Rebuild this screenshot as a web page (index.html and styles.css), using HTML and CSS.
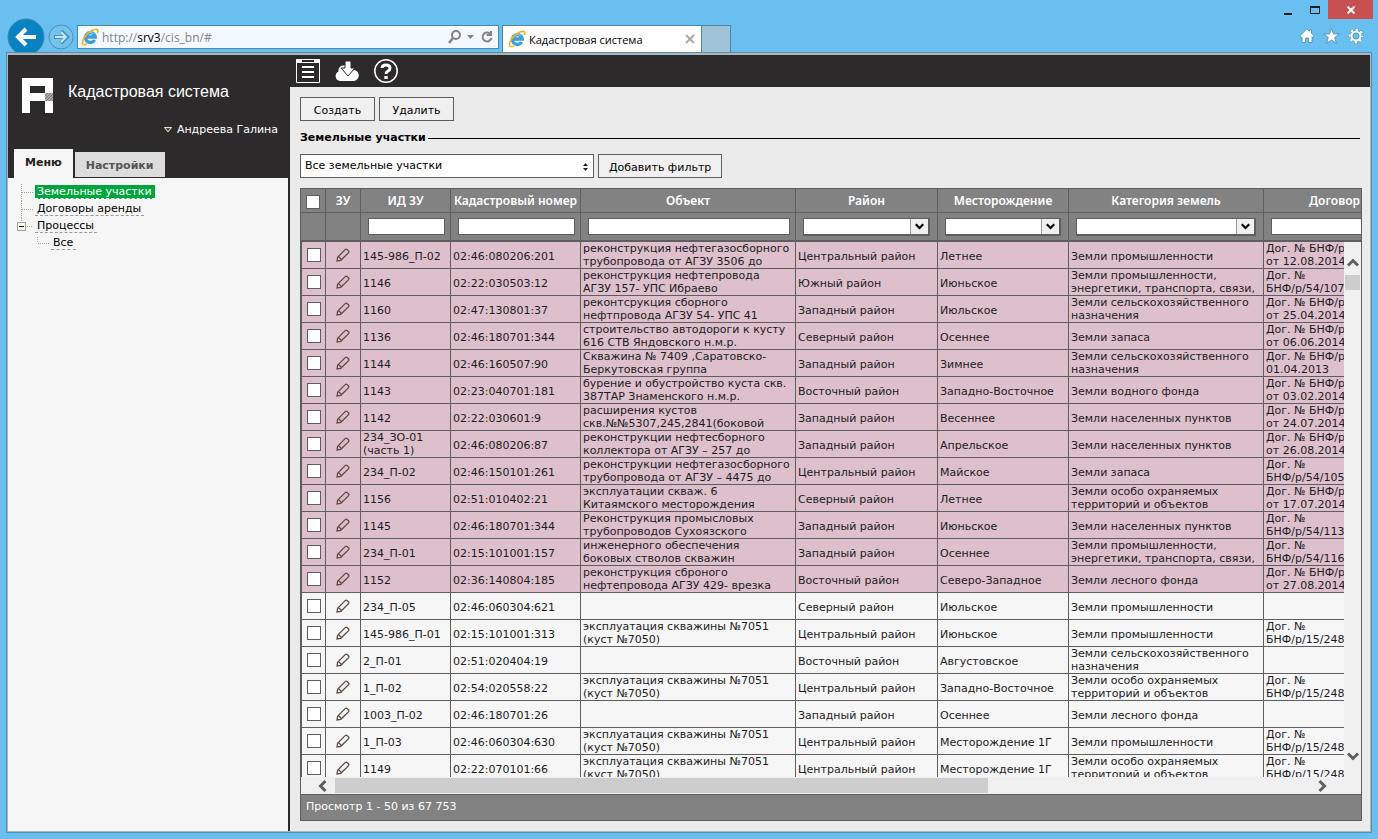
FILE: index.html
```html
<!DOCTYPE html>
<html lang="ru">
<head>
<meta charset="utf-8">
<title>Кадастровая система</title>
<link rel="stylesheet" href="styles.css">
</head>
<body>
<svg class="defs" aria-hidden="true">
  <symbol id="ie" viewBox="0 0 18 18">
    <path d="M13.600 12A4.900 4.900 0 1 1 14.200 9H5" fill="none" stroke="#3c9edb" stroke-width="3.400"/>
    <path d="M5.500 5.500Q9 3 12.500 5.500" fill="none" stroke="#9bd6f7" stroke-width="1"/>
    <path d="M2.400 16.600C.400 15.600 1.600 10.500 6 6.200C10.500 1.600 15.600 .200 16.600 2.200C17 3 16.700 4 16.300 5" fill="none" stroke="#f2b41c" stroke-width="1.700"/>
    <path d="M2.400 16.600C3.400 17 5 16.300 6 15.600" fill="none" stroke="#f2b41c" stroke-width="1.500"/>
  </symbol>
  <symbol id="pencil" viewBox="0 0 14 14">
    <path d="M1 13L1.600 9.200L9.400 1.400Q10.200 .800 11 1.400L12.600 3Q13.200 3.800 12.600 4.600L4.800 12.300ZM1.600 9.200Q2.500 8.600 3.200 9.200L4.800 10.800Q5.300 11.500 4.800 12.300" fill="none" stroke="#5d4c46" stroke-width="1.300"/>
  </symbol>
  <symbol id="chevron" viewBox="0 0 12 8">
    <path d="M1 1L6 6L11 1" fill="none" stroke="currentColor" stroke-width="3"/>
  </symbol>
</svg>

<div class="window">
  <header class="chrome">
    <div class="nav">
      <button class="back" aria-label="Назад"><svg width="38" height="38" viewBox="0 0 38 38"><circle cx="19" cy="19" r="18" fill="#0783c3" stroke="#3b86a8"/><path d="M29 19H12M19 11L11 19L19 27" fill="none" stroke="#fff" stroke-width="4"/></svg></button>
      <button class="forward" aria-label="Вперёд"><svg width="26" height="26" viewBox="0 0 26 26"><circle cx="13" cy="13" r="12" fill="#74c3ee" stroke="#4a91b5"/><path d="M6 13H18M13 7L19 13L13 19" fill="none" stroke="#4a91b5" stroke-width="4"/><path d="M7 13H18M13 8L18 13L13 18" fill="none" stroke="#c5e7f9" stroke-width="2"/></svg></button>
      <div class="address">
        <svg width="18" height="18"><use href="#ie"/></svg>
        <div class="url" role="textbox" aria-label="Адрес">http://<span class="host">srv3</span>/cis_bn/#</div>
        <svg width="46" height="16" viewBox="0 0 46 16"><circle cx="8" cy="6" r="4" fill="none" stroke="#7f8587" stroke-width="2"/><path d="M5 9L1 14" stroke="#7f8587" stroke-width="2.500"/><path d="M19 6H26L22.500 10Z" fill="#7f8587"/><path d="M42 4.500A4.500 4.500 0 1 0 43.500 9M43 2V6H38.500" fill="none" stroke="#7f8587" stroke-width="2"/></svg>
      </div>
      <div class="tab">
        <svg width="18" height="18"><use href="#ie"/></svg>
        <span class="tab-title">Кадастровая система</span>
        <button aria-label="Закрыть вкладку"><svg width="10" height="10" viewBox="0 0 10 10"><path d="M1 1L9 9M9 1L1 9" stroke="#aaa" stroke-width="2"/></svg></button>
      </div>
      <button class="new-tab" aria-label="Новая вкладка"></button>
    </div>
    <div class="window-side">
      <div class="window-buttons">
        <button aria-label="Свернуть"><svg width="12" height="12"><path d="M2 10H10" stroke="#1f1f1f" stroke-width="2"/></svg></button>
        <button aria-label="Развернуть"><svg width="12" height="10"><path d="M1.500 1V8.500H10.500V1" fill="none" stroke="#1f1f1f"/><path d="M1 2H11" stroke="#1f1f1f" stroke-width="2"/></svg></button>
        <button class="close" aria-label="Закрыть"><svg width="8" height="8" viewBox="0 0 8 8"><path d="M.500 .500L7.500 7.500M7.500 .500L.500 7.500" stroke="#fff" stroke-width="2"/></svg></button>
      </div>
      <div class="tools">
        <button aria-label="Домой"><svg width="16" height="16" viewBox="0 0 16 16"><path d="M8 .800L.800 8L2.300 9.400L3 8.800V14.500H6.500V10H9.500V14.500H13V8.800L13.700 9.400L15.200 8L12.500 5.300V2H10.500V3.300Z" fill="#fff" stroke="#4789ac" stroke-width=".8"/></svg></button>
        <button aria-label="Избранное"><svg width="17" height="16" viewBox="0 0 17 16"><path d="M8.500 .500L10.500 6H16.300L11.700 9.500L13.400 15.300L8.500 11.900L3.600 15.300L5.300 9.500L.700 6H6.500Z" fill="#fff" stroke="#4789ac" stroke-width=".8"/></svg></button>
        <button aria-label="Сервис"><svg width="16" height="16" viewBox="0 0 16 16"><circle cx="8" cy="8" r="6.300" fill="none" stroke="#4789ac" stroke-width="3.400" stroke-dasharray="3.200 1.748" stroke-dashoffset="1.600"/><circle cx="8" cy="8" r="6.300" fill="none" stroke="#fff" stroke-width="2.400" stroke-dasharray="2.400 2.548" stroke-dashoffset="1.200"/><circle cx="8" cy="8" r="4.300" fill="none" stroke="#fff" stroke-width="2"/><circle cx="8" cy="8" r="3" fill="none" stroke="#4789ac" stroke-width=".8"/></svg></button>
      </div>
    </div>
  </header>

  <div class="page">
    <aside class="sidebar">
      <div class="brand">
        <div class="brand-row">
          <svg width="31" height="35" viewBox="0 0 31 35"><path fill="#fff" fill-rule="evenodd" d="M0 0H31V35H23V23H8V35H0ZM8 8V15H23V8Z"/><path d="M23 15H31V23H23Z" fill="#aaa"/><path d="M23 18L26 15M23 21L29 15M24 23L31 16M27 23L31 19M30 23L31 22" stroke="#777"/></svg>
          <h1>Кадастровая система</h1>
        </div>
        <button class="user"><svg width="8" height="6" viewBox="0 0 8 6"><path d="M.500 .500H7.500L4 5Z" fill="#5d4c46" stroke="#eee4c8"/></svg>Андреева Галина</button>
        <div class="tabs" role="tablist">
          <button class="side-tab active" role="tab" aria-selected="true">Меню</button>
          <button class="side-tab" role="tab">Настройки</button>
        </div>
      </div>
      <ul class="tree">
        <li><svg class="branch" width="18" height="17"><path d="M4.500 0V17M5 8.500H16"/></svg><a class="current" href="#">Земельные участки</a></li>
        <li><svg class="branch" width="18" height="17"><path d="M4.500 0V17M5 8.500H16"/></svg><a href="#">Договоры аренды</a></li>
        <li><svg class="branch" width="18" height="17"><path d="M4.500 0V4M10 8.500H16"/><rect x=".5" y="4.500" width="8" height="8"/><path class="minus" d="M2 8.500H7"/></svg><a href="#">Процессы</a>
          <ul><li><svg class="branch" width="14" height="17"><path d="M.500 2V8M1 8.500H12"/></svg><a href="#">Все</a></li></ul>
        </li>
      </ul>
    </aside>

    <main class="main">
      <div class="topbar">
        <button aria-label="Журнал"><svg width="24" height="24" viewBox="0 0 24 24"><path d="M.500 .500H23.500V23.500H.500Z" fill="none" stroke="#fff"/><path d="M0 2H6M18 2H24" stroke="#fff" stroke-width="4"/><path d="M6 3.500H18" stroke="#fff"/><path d="M6 8H18M6 13H18M6 18H18" stroke="#fff" stroke-width="2"/></svg></button>
        <button aria-label="Загрузки"><svg width="24" height="24" viewBox="0 0 24 24"><path d="M5 22A5 5 0 0 1 3.500 12.500A5 5 0 0 1 8 6.500Q15 5 17.500 11A5.500 5.500 0 0 1 19 22Z" fill="#fff"/><path d="M10 2H16V9H20L13 17L6 9H10Z" fill="#fff" stroke="#2c2a2b"/></svg></button>
        <button aria-label="Справка"><svg width="24" height="24" viewBox="0 0 24 24"><circle cx="12" cy="12" r="11.200" fill="none" stroke="#fff" stroke-width="1.500"/><path d="M8 9Q8 6 12 6T16 9Q16 11 14 12T12 15" fill="none" stroke="#fff" stroke-width="3"/><path d="M10.300 17H13.700V20H10.300Z" fill="#fff"/></svg></button>
      </div>
      <div class="content">
        <div class="actions">
          <button class="btn">Создать</button>
          <button class="btn">Удалить</button>
        </div>
        <h2>Земельные участки</h2>
        <div class="actions">
          <div class="picker">
            <select aria-label="Представление"><option>Все земельные участки</option></select>
            <svg width="5" height="8" viewBox="0 0 5 8"><path d="M0 3L2.500 0L5 3ZM0 5H5L2.500 8Z" fill="#222"/></svg>
          </div>
          <button class="btn">Добавить фильтр</button>
        </div>

        <section class="grid">
          <div class="grid-head">
            <table>
              <colgroup><col class="c-check"><col class="c-edit"><col class="c-id"><col class="c-number"><col class="c-object"><col class="c-district"><col class="c-field"><col class="c-category"><col class="c-contract"></colgroup>
              <thead>
                <tr class="titles">
                  <th class="check"><input type="checkbox" aria-label="Выбрать все"></th><th>ЗУ</th><th>ИД ЗУ</th><th>Кадастровый номер</th><th>Объект</th><th>Район</th><th>Месторождение</th><th>Категория земель</th><th>Договор</th>
                </tr>
                <tr class="filters">
                  <td></td><td></td>
                  <td><input type="text" aria-label="ИД ЗУ"></td>
                  <td><input type="text" aria-label="Кадастровый номер"></td>
                  <td><input type="text" aria-label="Объект"></td>
                  <td><div class="drop"><select aria-label="Район"></select><svg width="10" height="7"><use href="#chevron"/></svg></div></td>
                  <td><div class="drop"><select aria-label="Месторождение"></select><svg width="10" height="7"><use href="#chevron"/></svg></div></td>
                  <td><div class="drop"><select aria-label="Категория земель"></select><svg width="10" height="7"><use href="#chevron"/></svg></div></td>
                  <td><input type="text" aria-label="Договор"></td>
                </tr>
              </thead>
            </table>
          </div>
          <div class="grid-middle">
            <div class="grid-body">
              <table>
                <colgroup><col class="c-check"><col class="c-edit"><col class="c-id"><col class="c-number"><col class="c-object"><col class="c-district"><col class="c-field"><col class="c-category"><col class="c-contract"></colgroup>
                <tbody id="rows"></tbody>
              </table>
            </div>
            <div class="vscroll">
              <svg class="up" width="12" height="9"><use href="#chevron"/></svg>
              <div class="thumb"></div>
              <svg class="down" width="12" height="9"><use href="#chevron"/></svg>
            </div>
          </div>
          <div class="hscroll">
            <svg width="9" height="12" viewBox="0 0 9 12"><path d="M7.500 1L2.500 6L7.500 11" fill="none" stroke="#606060" stroke-width="3"/></svg>
            <div class="track"><div class="thumb"></div></div>
            <svg width="9" height="12" viewBox="0 0 9 12"><path d="M1.500 1L6.500 6L1.500 11" fill="none" stroke="#606060" stroke-width="3"/></svg>
          </div>
          <footer class="pager">Просмотр 1 - 50 из 67 753</footer>
        </section>
      </div>
    </main>
  </div>
</div>
<script src="rows.js"></script>
</body>
</html>
```

FILE: styles.css
```css
* { box-sizing: border-box; }

body {
  margin: 0;
  background: #69c0f0;
  font: 11px/13px "DejaVu Sans", Verdana, sans-serif;
  color: #1c1c1c;
}

button {
  margin: 0;
  padding: 0;
  border: 0;
  background: none;
  font: inherit;
  color: inherit;
}

svg { display: block; flex: none; }
.defs { position: absolute; width: 0; height: 0; }

.window {
  display: flex;
  flex-direction: column;
  height: 100vh;
  padding: 0 6px 6px;
}

/* Browser frame */
.chrome {
  display: flex;
  justify-content: space-between;
  height: 52px;
}
.nav { display: flex; align-items: flex-start; padding-top: 18px; overflow: hidden; }
.back { margin-left: 1px; }
.forward { margin: 6px 3px 0; }
.address {
  display: flex;
  align-items: center;
  gap: 3px;
  width: 422px;
  height: 24px;
  margin-top: 7px;
  padding: 0 4px 0 3px;
  border: 1px solid #4a8aa8;
  background: #f2faff;
}
.url {
  flex: 1;
  padding-top: 2px;
  font: 12px/18px "Open Sans", "Noto Sans", sans-serif;
  color: #858585;
}
.host { color: #000; }
.tab {
  display: flex;
  align-items: center;
  gap: 3px;
  width: 200px;
  height: 27px;
  margin: 7px 0 0 3px;
  padding: 0 6px 0 5px;
  border: 1px solid #4a8aa8;
  border-bottom: 0;
  background: #fff;
}
.tab-title {
  flex: 1;
  padding-top: 2px;
  font: 11px/18px "Open Sans", "Noto Sans", sans-serif;
  white-space: nowrap;
  color: #000;
}
.new-tab {
  width: 29px;
  height: 27px;
  margin-top: 7px;
  border: 1px solid #4a8aa8;
  border-width: 1px 1px 0 0;
  background: #a0c3d7;
}
.window-side { display: flex; flex-direction: column; align-items: flex-end; gap: 9px; }
.window-buttons { display: flex; align-items: center; gap: 15px; }
.close {
  display: flex;
  align-items: center;
  justify-content: center;
  width: 45px;
  height: 19px;
  margin: 0 -1px 0 -8px;
  background: #c75050;
}
.tools { display: flex; gap: 8px; padding-right: 8px; }

/* Application */
.page {
  display: flex;
  flex: 1;
  min-height: 0;
  border: 2px solid #b5b5b5;
  outline: 1px solid #4a91b5;
  outline-offset: -1px;
  border-top-width: 3px;
  background: #ebebeb;
}
.sidebar {
  width: 282px;
  border-right: 2px solid #2c2a2b;
  background: #f6f6f6;
}
.brand {
  display: flex;
  flex-direction: column;
  height: 123px;
  padding: 23px 10px 0 6px;
  background: #2c2a2b;
  color: #fff;
}
.brand-row { display: flex; gap: 15px; padding-left: 8px; }
h1 {
  margin: 4px 0 0;
  font: 16px/20px "Liberation Sans", Arial, sans-serif;
}
.user {
  display: flex;
  align-items: center;
  align-self: flex-end;
  gap: 5px;
  margin-top: 10px;
  line-height: 14px;
}
.tabs { display: flex; align-items: flex-end; gap: 2px; margin-top: auto; }
.side-tab {
  height: 25px;
  margin-bottom: 1px;
  padding: 2px 11px 0;
  background: #ddd;
  color: #555;
  font-weight: bold;
}
.side-tab.active {
  height: 29px;
  margin-bottom: 0;
  padding-bottom: 4px;
  background: #f6f6f6;
  color: #222;
}
.tree, .tree ul { margin: 0; padding: 0; list-style: none; }
.tree { padding: 6px 0 0 9px; }
.tree li { display: flex; flex-wrap: wrap; }
.tree ul { width: 100%; padding-left: 20px; }
.tree a {
  height: 14px;
  margin: 1px 0 2px;
  padding: 0 3px 0 2px;
  border-bottom: 1px dashed #999;
  line-height: 14px;
  color: #000;
  text-decoration: none;
}
.tree a.current { border-color: #fff; background: #00a63c; color: #fff; }
.branch { fill: none; stroke: #a5a58c; }
.branch path { stroke-dasharray: 1 1; }
.branch .minus { stroke: #000; stroke-dasharray: none; }

.main { display: flex; flex: 1; flex-direction: column; min-width: 0; }
.topbar {
  display: flex;
  gap: 15px;
  padding: 4px 6px;
  background: #2c2a2b;
}
.content {
  display: flex;
  flex: 1;
  flex-direction: column;
  min-height: 0;
  padding: 10px 8px 10px 10px;
}
.actions { display: flex; gap: 4px; }
.btn {
  min-width: 75px;
  height: 24px;
  padding: 2px 10px 0;
  border: 1px solid #5e5e5e;
  background: #f0f0f0;
  color: #000;
}
h2 {
  display: flex;
  align-items: center;
  gap: 2px;
  margin: 10px 2px 9px 0;
  font-size: 11px;
  line-height: 14px;
  color: #000;
}
h2::after { content: ""; flex: 1; border-top: 1px solid #000; }
.picker { position: relative; width: 294px; }
.picker select, .drop select {
  width: 100%;
  border: 1px solid #5e5e5e;
  border-radius: 0;
  background: #fff;
  color: #000;
  font: inherit;
  appearance: none;
}
.picker select { height: 24px; padding: 0 5px 2px 4px; }
.picker svg { position: absolute; right: 6px; top: 9px; }

/* Grid */
.grid {
  display: flex;
  flex: 1;
  flex-direction: column;
  min-height: 0;
  margin-top: 10px;
  border: 1px solid #5e5e5e;
}
.grid table { width: 1105px; border-spacing: 0; table-layout: fixed; }
.grid-head { overflow: hidden; background: #828282; color: #fff; }
.grid th, .grid td {
  padding: 0;
  border: 1px solid #5e5e5e;
  border-width: 0 1px 1px 0;
}
.c-check { width: 25px; }
.c-edit { width: 35px; }
.c-id { width: 90px; }
.c-number { width: 130px; }
.c-object { width: 215px; }
.c-district { width: 142px; }
.c-field { width: 131px; }
.c-category { width: 195px; }
.c-contract { width: 142px; }
.titles th {
  height: 24px;
  font: 600 12px/16px "Noto Sans", "Open Sans", sans-serif;
  white-space: nowrap;
}
.grid .filters td { height: 29px; padding: 0 5px 0 7px; border-bottom-width: 2px; }
.filters input {
  display: block;
  width: 100%;
  height: 17px;
  border: 1px solid #5e5e5e;
  background: #fff;
}
.drop { position: relative; margin-right: 2px; }
.drop select { display: block; height: 18px; border-width: 1px 2px 2px 1px; }
.drop svg {
  position: absolute;
  top: 1px;
  right: 2px;
  width: 18px;
  height: 15px;
  padding: 4px;
  border-left: 1px solid #999;
  background: #f0f0f0;
  color: #000;
}
.grid input[type="checkbox"] {
  display: block;
  width: 14px;
  height: 14px;
  margin: 0 0 0 6px;
  border: 1px solid #5e5e5e;
  background: #fff;
  appearance: none;
}
.grid .titles input[type="checkbox"] { margin: 3px 0 0 5px; }
.grid-middle { display: flex; flex: 1; min-height: 0; }
.grid-body {
  flex: 1;
  min-width: 0;
  overflow: hidden;
  background: #f6f6f6;
  box-shadow: inset 1px 0 #5e5e5e;
}
.grid-body tr.marked { background: #dec0cc; }
.grid-body td { height: 27px; vertical-align: middle; }
.grid-body td:first-child { border-left-width: 1px; }
.cell {
  max-height: 26px;
  overflow: hidden;
  padding: 0 2px;
  white-space: pre-line;
}
.cell.single { white-space: nowrap; padding-top: 3px; }
.grid-body input[type="checkbox"] { margin-left: 5px; }
.edit { display: block; margin: 0 auto; }
.vscroll {
  display: flex;
  flex-direction: column;
  align-items: center;
  width: 17px;
  padding: 16px 0;
  background: #f0f0f0;
  color: #606060;
}
.vscroll .up { transform: rotate(180deg); }
.vscroll .thumb { width: 15px; height: 15px; margin-top: 8px; background: #cdcdcd; }
.vscroll .down { margin-top: auto; }
.hscroll {
  display: flex;
  align-items: center;
  height: 17px;
  padding: 0 34px 0 17px;
  background: #f0f0f0;
}
.track { flex: 1; margin: 0 8px; }
.hscroll .thumb { width: 67%; height: 15px; background: #cdcdcd; }
.pager {
  height: 26px;
  padding: 5px;
  border-top: 1px solid #5e5e5e;
  background: #828282;
  color: #fff;
}
```

FILE: rows.js
```js
const rows = [
  ["145-986_П-02", "02:46:080206:201", "реконструкция нефтегазосборного\nтрубопровода от АГЗУ 3506 до", "Центральный район", "Летнее", "Земли промышленности", "Дог. № БНФ/р\nот 12.08.2014", 1],
  ["1146", "02:22:030503:12", "реконструкция нефтепровода\nАГЗУ 157- УПС Ибраево", "Южный район", "Июньское", "Земли промышленности,\nэнергетики, транспорта, связи,", "Дог. №\nБНФ/р/54/107", 1],
  ["1160", "02:47:130801:37", "реконтсрукция сборного\nнефтпровода АГЗУ 54- УПС 41", "Западный район", "Июльское", "Земли сельскохозяйственного\nназначения", "Дог. № БНФ/р\nот 25.04.2014", 1],
  ["1136", "02:46:180701:344", "строительство автодороги к кусту\n616 СТВ Яндовского н.м.р.", "Северный район", "Осеннее", "Земли запаса", "Дог. № БНФ/р\nот 06.06.2014", 1],
  ["1144", "02:46:160507:90", "Скважина № 7409 ,Саратовско-\nБеркутовская группа", "Западный район", "Зимнее", "Земли сельскохозяйственного\nназначения", "Дог. № БНФ/р\n01.04.2013", 1],
  ["1143", "02:23:040701:181", "бурение и обустройство куста скв.\n387ТАР Знаменского н.м.р.", "Восточный район", "Западно-Восточное", "Земли водного фонда", "Дог. № БНФ/р\nот 03.02.2014", 1],
  ["1142", "02:22:030601:9", "расширения кустов\nскв.№№5307,245,2841(боковой", "Западный район", "Весеннее", "Земли населенных пунктов", "Дог. № БНФ/р\nот 24.07.2014", 1],
  ["234_ЗО-01\n(часть 1)", "02:46:080206:87", "реконструкции нефтесборного\nколлектора от АГЗУ – 257 до", "Западный район", "Апрельское", "Земли населенных пунктов", "Дог. № БНФ/р\nот 26.08.2014", 1],
  ["234_П-02", "02:46:150101:261", "реконструкции нефтегазосборного\nтрубопровода от АГЗУ – 4475 до", "Центральный район", "Майское", "Земли запаса", "Дог. №\nБНФ/р/54/105", 1],
  ["1156", "02:51:010402:21", "эксплуатации скваж. 6\nКитаямского месторождения", "Северный район", "Летнее", "Земли особо охраняемых\nтерриторий и объектов", "Дог. № БНФ/р\nот 17.07.2014", 1],
  ["1145", "02:46:180701:344", "Реконструкция промысловых\nтрубопроводов Сухоязского", "Западный район", "Июньское", "Земли населенных пунктов", "Дог. №\nБНФ/р/54/113", 1],
  ["234_П-01", "02:15:101001:157", "инженерного обеспечения\nбоковых стволов скважин", "Западный район", "Осеннее", "Земли промышленности,\nэнергетики, транспорта, связи,", "Дог. №\nБНФ/р/54/116", 1],
  ["1152", "02:36:140804:185", "реконструкция сброного\nнефтепровода АГЗУ 429- врезка", "Восточный район", "Северо-Западное", "Земли лесного фонда", "Дог. № БНФ/р\nот 27.08.2014", 1],
  ["234_П-05", "02:46:060304:621", "", "Северный район", "Июльское", "Земли промышленности", "", 0],
  ["145-986_П-01", "02:15:101001:313", "эксплуатация скважины №7051\n(куст №7050)", "Центральный район", "Июньское", "Земли промышленности", "Дог. №\nБНФ/р/15/248", 0],
  ["2_П-01", "02:51:020404:19", "", "Восточный район", "Августовское", "Земли сельскохозяйственного\nназначения", "", 0],
  ["1_П-02", "02:54:020558:22", "эксплуатация скважины №7051\n(куст №7050)", "Центральный район", "Западно-Восточное", "Земли особо охраняемых\nтерриторий и объектов", "Дог. №\nБНФ/р/15/248", 0],
  ["1003_П-02", "02:46:180701:26", "", "Западный район", "Осеннее", "Земли лесного фонда", "", 0],
  ["1_П-03", "02:46:060304:630", "эксплуатация скважины №7051\n(куст №7050)", "Центральный район", "Месторождение 1Г", "Земли промышленности", "Дог. №\nБНФ/р/15/248", 0],
  ["1149", "02:22:070101:66", "эксплуатация скважины №7051\n(куст №7050)", "Центральный район", "Месторождение 1Г", "Земли особо охраняемых\nтерриторий и объектов", "Дог. №\nБНФ/р/15/248", 0]
];

document.getElementById("rows").innerHTML = rows.map((row) => {
  const cells = row.slice(0, 7).map((text) =>
    `<td><div class="cell${text.includes("\n") ? "" : " single"}">${text}</div></td>`).join("");
  return `<tr class="${row[7] ? "marked" : ""}">
    <td><input type="checkbox" aria-label="Выбрать ${row[0]}"></td>
    <td><button class="edit" aria-label="Изменить ${row[0]}"><svg width="14" height="14"><use href="#pencil"/></svg></button></td>
    ${cells}</tr>`;
}).join("");
```
